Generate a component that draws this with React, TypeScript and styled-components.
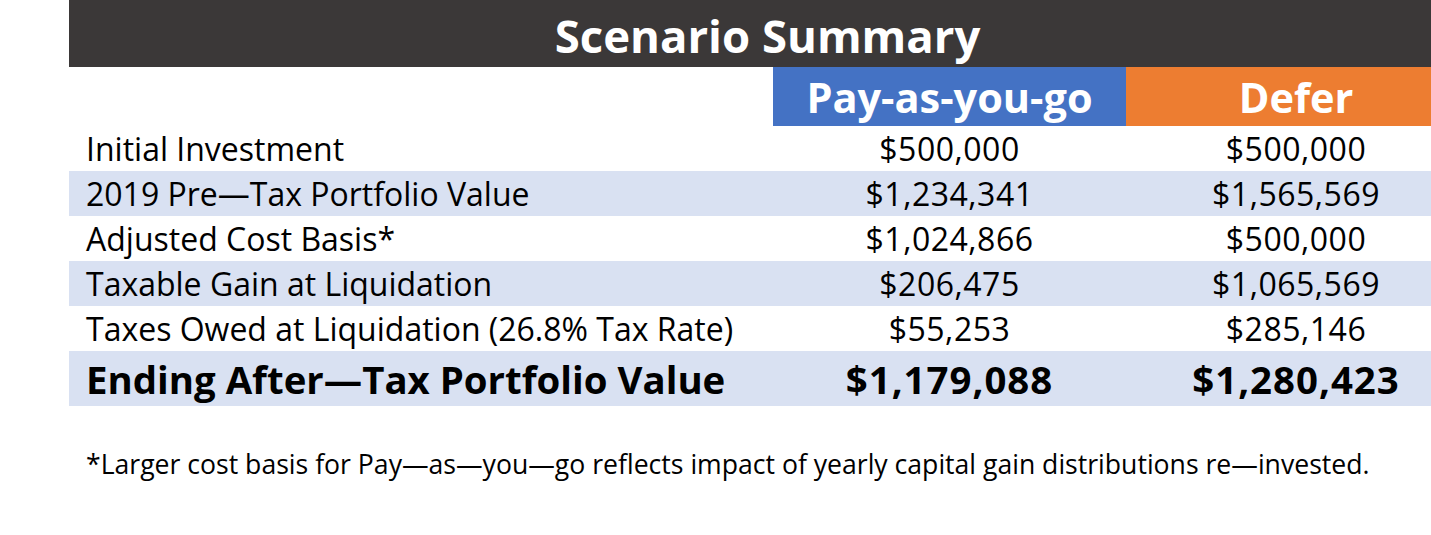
import React from "react";
import styled, { createGlobalStyle } from "styled-components";

const Global = createGlobalStyle`
  html, body { margin: 0; padding: 0; background: #ffffff; overflow: hidden; }
  body { font-family: "Open Sans", Lato, "Liberation Sans", sans-serif; color: #000; }
`;

const Page = styled.div`
  width: 1431px;
  height: 535px;
  overflow: hidden;
  padding-left: 69px;
  box-sizing: border-box;
`;

const Board = styled.div`
  width: 1397px;
  display: flex;
  flex-direction: column;
`;

const TitleBar = styled.div`
  height: 67px;
  background: #3b3838;
  color: #fff;
  font-weight: 700;
  font-size: 45.5px;
  display: flex;
  align-items: center;
  justify-content: center;
  padding-top: 2px;
  box-sizing: border-box;
`;

const Grid = styled.div`
  display: grid;
  grid-template-columns: 704px 353px 340px;
`;

const HeadCell = styled.div<{ $bg?: string }>`
  height: 59px;
  background: ${(p) => p.$bg || "transparent"};
  color: #fff;
  font-weight: 700;
  font-size: 41.5px;
  display: flex;
  align-items: center;
  justify-content: center;
`;

const Cell = styled.div<{ $band: boolean; $label?: boolean; $bold?: boolean }>`
  height: ${(p) => (p.$bold ? 55 : 45)}px;
  background: ${(p) => (p.$band ? "#d9e1f2" : "#ffffff")};
  display: flex;
  align-items: center;
  justify-content: ${(p) => (p.$label ? "flex-start" : "center")};
  padding-left: ${(p) => (p.$label ? 17 : 0)}px;
  font-size: ${(p) => (p.$bold ? 38.4 : 32)}px;
  font-weight: ${(p) => (p.$bold ? 700 : 400)};
  letter-spacing: ${(p) => (p.$label ? 0 : p.$bold ? 1 : 0.5)}px;
  white-space: nowrap;
  box-sizing: border-box;
`;

const Footnote = styled.div`
  margin-top: 40px;
  padding-left: 17px;
  font-size: 26.6px;
  white-space: nowrap;
`;

const rows: [string, string, string][] = [
  ["Initial Investment", "$500,000", "$500,000"],
  ["2019 Pre\u2014Tax Portfolio Value", "$1,234,341", "$1,565,569"],
  ["Adjusted Cost Basis*", "$1,024,866", "$500,000"],
  ["Taxable Gain at Liquidation", "$206,475", "$1,065,569"],
  ["Taxes Owed at Liquidation (26.8% Tax Rate)", "$55,253", "$285,146"],
  ["Ending After\u2014Tax Portfolio Value", "$1,179,088", "$1,280,423"],
];

export default function App() {
  return (
    <Page>
      <Global />
      <Board>
        <TitleBar>Scenario Summary</TitleBar>
        <Grid>
          <HeadCell />
          <HeadCell $bg="#4472c4">Pay-as-you-go</HeadCell>
          <HeadCell $bg="#ed7d31">Defer</HeadCell>
          {rows.map((r, i) => {
            const band = i % 2 === 1;
            const bold = i === rows.length - 1;
            return (
              <React.Fragment key={r[0]}>
                <Cell $band={band} $label $bold={bold}>{r[0]}</Cell>
                <Cell $band={band} $bold={bold}>{r[1]}</Cell>
                <Cell $band={band} $bold={bold}>{r[2]}</Cell>
              </React.Fragment>
            );
          })}
        </Grid>
        <Footnote>
          *Larger cost basis for Pay{"\u2014"}as{"\u2014"}you{"\u2014"}go reflects impact of yearly capital gain distributions re{"\u2014"}invested.
        </Footnote>
      </Board>
    </Page>
  );
}
